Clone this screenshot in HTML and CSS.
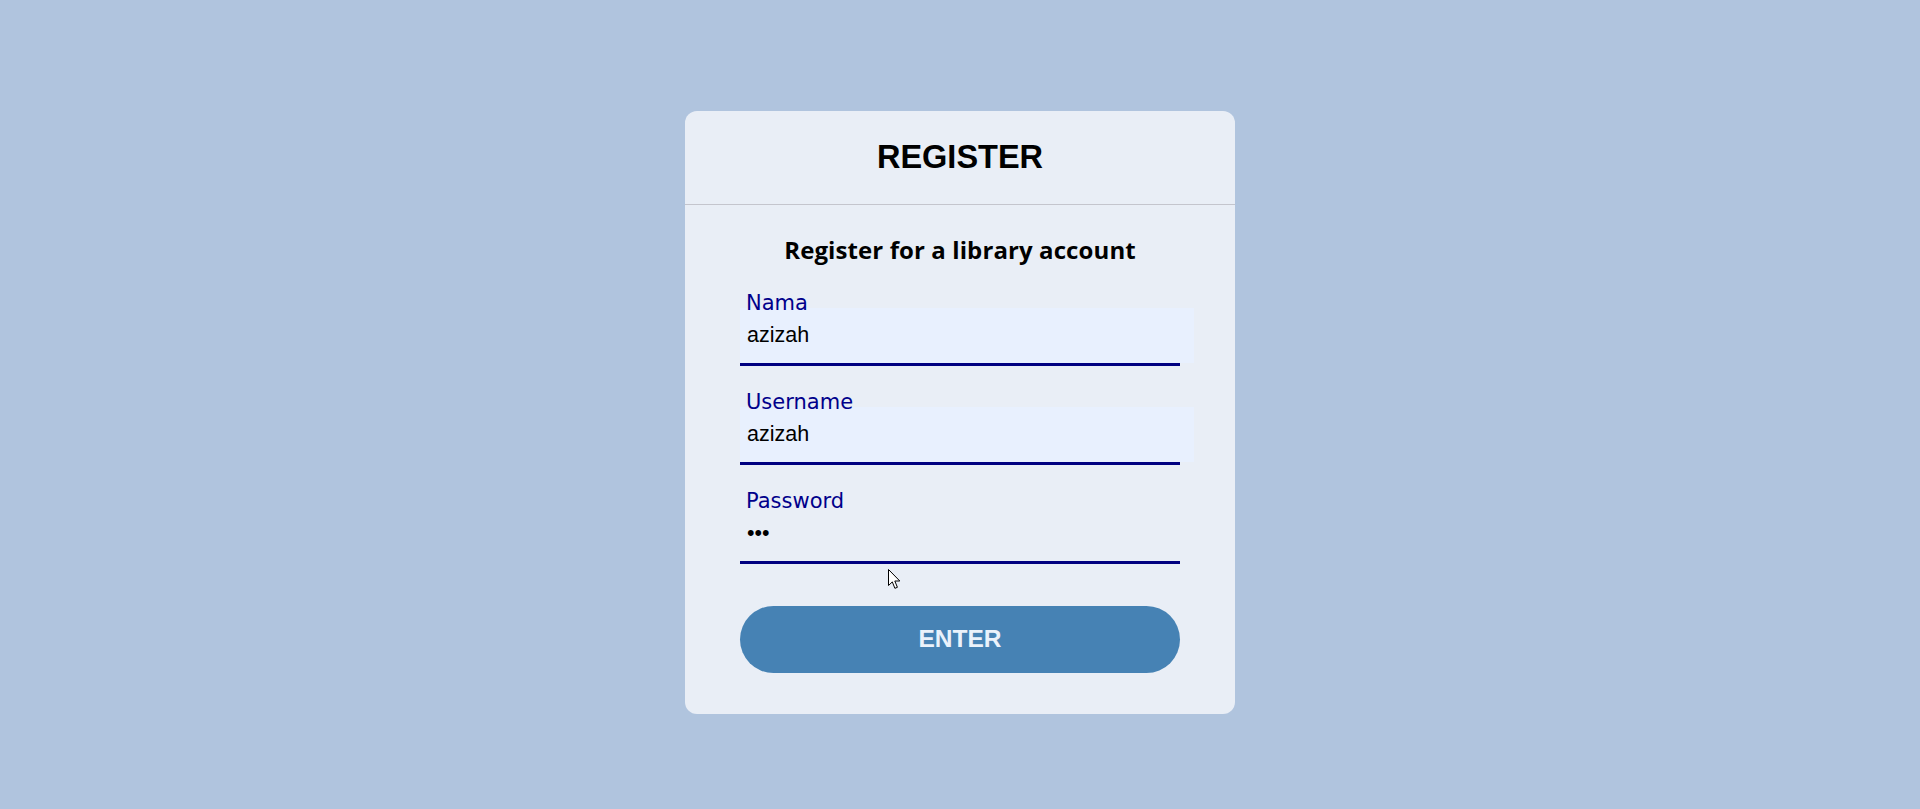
FILE: index.html
```html
<!DOCTYPE html>
<html lang="en">
<head>
<meta charset="utf-8">
<title>Register</title>
<link rel="stylesheet" href="styles.css">
</head>
<body>
<div class="card">
  <div class="card-header">
    <h1 class="title">REGISTER</h1>
  </div>
  <form class="card-form" onsubmit="return false">
    <h3 class="subtitle">Register for a library account</h3>
    <div class="field">
      <label class="field-label" for="nama">Nama</label>
      <input class="field-input autofilled" id="nama" type="text" value="azizah">
    </div>
    <div class="field">
      <label class="field-label" for="username">Username</label>
      <input class="field-input autofilled" id="username" type="text" value="azizah">
    </div>
    <div class="field">
      <label class="field-label" for="password">Password</label>
      <input class="field-input" id="password" type="password" value="abc" autofocus>
    </div>
    <button class="enter-btn" type="submit">ENTER</button>
  </form>
</div>
<svg class="mouse-cursor" width="13" height="21" viewBox="0 0 13 21" aria-hidden="true">
  <path d="M0.5 0.5 L0.5 16.5 L4.3 12.9 L6.9 19.3 L9.4 18.3 L6.8 12 L11.8 12 Z" fill="#ffffff" stroke="#000000" stroke-width="1" stroke-linejoin="miter"/>
</svg>
</body>
</html>
```
FILE: styles.css
```css
html, body {
  margin: 0;
  padding: 0;
}

body {
  background: #b0c4de;
  height: 809px;
  overflow: hidden;
  font-family: "Liberation Sans", Arial, sans-serif;
  position: relative;
}

.card {
  width: 550px;
  margin: 111px auto 0;
  background: #e9eef6;
  border-radius: 12px;
}

.card-header {
  height: 93px;
  display: flex;
  align-items: center;
  justify-content: center;
  border-bottom: 1px solid #c4c5cd;
}

.title {
  margin: 0 0 2px;
  font-family: "Liberation Sans", Arial, sans-serif;
  font-weight: 700;
  font-size: 32.5px;
  line-height: 34px;
  color: #000;
}

.card-form {
  padding: 30px 55px 41px;
  display: flex;
  flex-direction: column;
}

.subtitle {
  margin: 0 0 2px;
  text-align: center;
  font-family: "Open Sans", "Noto Sans", sans-serif;
  font-weight: 700;
  font-size: 24px;
  line-height: 30px;
  letter-spacing: 0.1px;
  color: #000;
}

.field {
  margin-top: 27px;
  border-bottom: 3px solid #000080;
  display: flex;
  flex-direction: column;
}

.field-label {
  display: block;
  font-family: "DejaVu Sans", Verdana, sans-serif;
  font-size: 21px;
  line-height: 19px;
  height: 17px;
  padding-left: 6px;
  color: #00008b;
  position: relative;
  z-index: 1;
}

.field-input {
  display: block;
  margin: -3px 0 0;
  width: 440px;
  height: 55px;
  padding: 0 7px;
  border: none;
  outline: none;
  background: transparent;
  font-family: "Liberation Sans", Arial, sans-serif;
  font-size: 21.5px;
  color: #000;
  caret-color: #000;
}

.field-input.autofilled {
  background: #e8f0fe;
}

.enter-btn {
  margin-top: 42px;
  height: 67px;
  width: 440px;
  border: none;
  border-radius: 34px;
  background: #4682b4;
  color: #eaf2fb;
  font-family: "Liberation Sans", Arial, sans-serif;
  font-weight: 700;
  font-size: 24.5px;
  padding: 0 0 2px;
  cursor: pointer;
}

.mouse-cursor {
  position: absolute;
  left: 888px;
  top: 569px;
}
```
